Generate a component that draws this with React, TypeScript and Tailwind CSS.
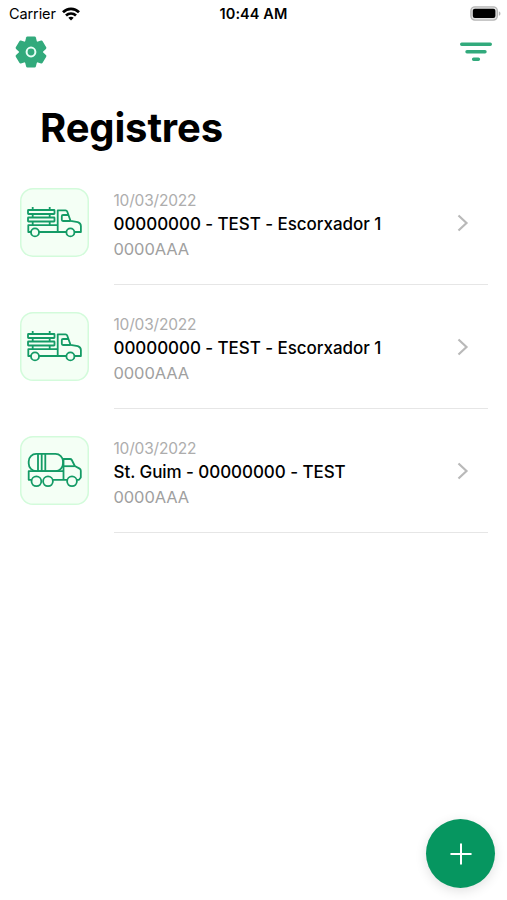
import React from 'react';

interface Registre {
    id: number;
    date: string;
    title: string;
    plate: string;
    kind: 'livestock' | 'tank';
}

const registres: Registre[] = [
    { id: 1, date: '10/03/2022', title: '00000000 - TEST - Escorxador 1', plate: '0000AAA', kind: 'livestock' },
    { id: 2, date: '10/03/2022', title: '00000000 - TEST - Escorxador 1', plate: '0000AAA', kind: 'livestock' },
    { id: 3, date: '10/03/2022', title: 'St. Guim - 00000000 - TEST', plate: '0000AAA', kind: 'tank' },
];

function WifiIcon() {
    return (
        <svg width="18" height="14" viewBox="0 0 18 14" fill="none" stroke="#000" strokeWidth="2.7">
            <path d="M1 5.2C5.4 0.7 12.6 0.7 17 5.2" />
            <path d="M4 8.5C6.8 5.8 11.2 5.8 14 8.5" />
            <path d="M6.3 10.8C7.9 9.3 10.1 9.3 11.7 10.8L9 13.5Z" fill="#000" stroke="none" />
        </svg>
    );
}

function BatteryIcon() {
    return (
        <svg width="31" height="15" viewBox="0 0 31 15">
            <rect x="0.9" y="0.9" width="26.4" height="13.2" rx="4" fill="#e2e2e2" stroke="#b5b5b5" strokeWidth="1.4" />
            <rect x="2.8" y="2.8" width="22.6" height="9.2" rx="2" fill="#000" />
            <path d="M28.8 5.2C31 6 31 9 28.8 9.8Z" fill="#b5b5b5" />
        </svg>
    );
}

function GearIcon() {
    return (
        <svg width="32" height="32" viewBox="-16 -16 32 32" fill="#32aa7c">
            <circle r="12" />
            {[0, 60, 120, 180, 240, 300].map((angle) => (
                <path
                    key={angle}
                    d="M-6.2 -9L-4.9 -14.4Q-4.6 -15.5 -3.6 -15.5H3.6Q4.6 -15.5 4.9 -14.4L6.2 -9Z"
                    transform={`rotate(${angle})`}
                />
            ))}
            <circle r="4.4" stroke="#e9fff6" strokeWidth="2" />
        </svg>
    );
}

function FilterIcon() {
    return (
        <svg width="34" height="22" viewBox="0 0 34 22" fill="none" stroke="#32aa7c" strokeWidth="3.4" strokeLinecap="round">
            <path d="M2.7 3.2H31.3M8 10.7H26M14.6 18.3H19.4" />
        </svg>
    );
}

function LivestockTruck() {
    return (
        <svg width="69" height="69" viewBox="0 0 69 69" fill="none" stroke="#149b66" strokeWidth="1.8" strokeLinejoin="round">
            <rect x="8" y="22" width="26.5" height="4" rx="0.5" />
            <rect x="8" y="29.5" width="26.5" height="4" rx="0.5" />
            <path d="M12.7 19V22M29.7 19V22M12.7 26V29.5M29.7 26V29.5M12.7 33.5V37.2M29.7 33.5V37.2" />
            <path d="M11 44H8.3V37.2H37.7" />
            <path d="M19 44H46.3M37.7 44V22.3H45.5Q46.8 22.3 47.2 23.5L50.5 32.8L57.8 34.2Q60.8 35.2 60.9 38V44H54.5" />
            <path d="M48.2 27H43Q41.8 27 41.8 28.2V31.8Q41.8 33 43 33H50.5" />
            <circle cx="15" cy="44.4" r="4" />
            <circle cx="50.4" cy="44.4" r="4" />
        </svg>
    );
}

function TankTruck() {
    return (
        <svg width="69" height="69" viewBox="0 0 69 69" fill="none" stroke="#149b66" strokeWidth="1.8" strokeLinejoin="round">
            <rect x="8.7" y="17.9" width="34.3" height="17.2" rx="7.5" />
            <path d="M18 18V35M21.7 18V35M25.3 18V35" />
            <path d="M11.5 43.8H8.7V35.1H43.5M33 43.8H47.2" />
            <path d="M43.5 43.8V23H50Q51.2 23 51.8 24L54.8 30L59.6 32.6Q60.8 33.3 60.8 34.8V41.5L59 43.8H56.8" />
            <path d="M43.5 30.2H54.8" />
            <circle cx="16.4" cy="45.3" r="4.9" />
            <circle cx="28" cy="45.3" r="4.9" />
            <circle cx="52" cy="45.3" r="4.9" />
        </svg>
    );
}

function RegistreRow({ registre }: { registre: Registre }) {
    return (
        <li className="flex h-[123.8px] pl-5 pr-[19px]">
            <div className="mt-[27px] h-[69px] w-[69px] shrink-0 rounded-[13px] bg-[#f4fff5] shadow-[inset_0_0_0_1.5px_#d3fbdb]">
                {registre.kind === 'livestock' ? <LivestockTruck /> : <TankTruck />}
            </div>
            <div className="ml-[25px] flex flex-1 border-b border-[#e6e6e6]">
                <div className="-ml-[0.5px] flex-1 whitespace-nowrap pt-[30px]">
                    <p className="text-[15.5px] leading-5 tracking-[-0.2px] text-[#adadad]">{registre.date}</p>
                    <p className="mt-[1px] text-[17px] font-medium leading-6 tracking-[-0.06px] text-black">{registre.title}</p>
                    <p className="mt-[1px] text-[16.5px] leading-6 tracking-[-0.1px] text-[#a0a0a0]">{registre.plate}</p>
                </div>
                <svg className="mr-[19px] mt-[53px]" width="12" height="18" viewBox="0 0 12 18" fill="none" stroke="#b9b9b9" strokeWidth="2.2">
                    <path d="M1.5 1.5L9.5 9L1.5 16.5" />
                </svg>
            </div>
        </li>
    );
}

export default function App() {
    return (
        <div className="relative h-[900px] w-[507px] overflow-hidden bg-white font-['Inter',sans-serif] text-black">
            <div className="grid h-7 grid-cols-3 items-center pl-[9px] pr-[6px]">
                <div className="flex items-center gap-[6px]">
                    <span className="text-[14.5px] leading-7 tracking-[-0.1px]">Carrier</span>
                    <WifiIcon />
                </div>
                <span className="-ml-[3px] text-center text-[14.5px] font-semibold leading-7 tracking-[0.1px]">10:44 AM</span>
                <div className="flex justify-end pb-[2px]">
                    <BatteryIcon />
                </div>
            </div>

            <header className="flex h-12 items-center justify-between pl-[15px] pr-[14px]">
                <button aria-label="Configuració">
                    <GearIcon />
                </button>
                <button aria-label="Filtre">
                    <FilterIcon />
                </button>
            </header>

            <h1 className="h-[85.4px] pl-10 pt-[27px] text-[40px] font-bold leading-[50px] tracking-[-0.15px]">Registres</h1>

            <ul>
                {registres.map((registre) => (
                    <RegistreRow key={registre.id} registre={registre} />
                ))}
            </ul>

            <button
                aria-label="Afegir"
                className="absolute left-[426px] top-[819px] flex h-[69px] w-[69px] items-center justify-center rounded-full bg-[#069660] shadow-[0_3px_12px_rgba(0,0,0,0.12)]"
            >
                <svg width="22" height="22" viewBox="0 0 22 22" stroke="#fff" strokeWidth="2" strokeLinecap="round">
                    <path d="M11 1.2V20.8M1.2 11H20.8" />
                </svg>
            </button>
        </div>
    );
}
